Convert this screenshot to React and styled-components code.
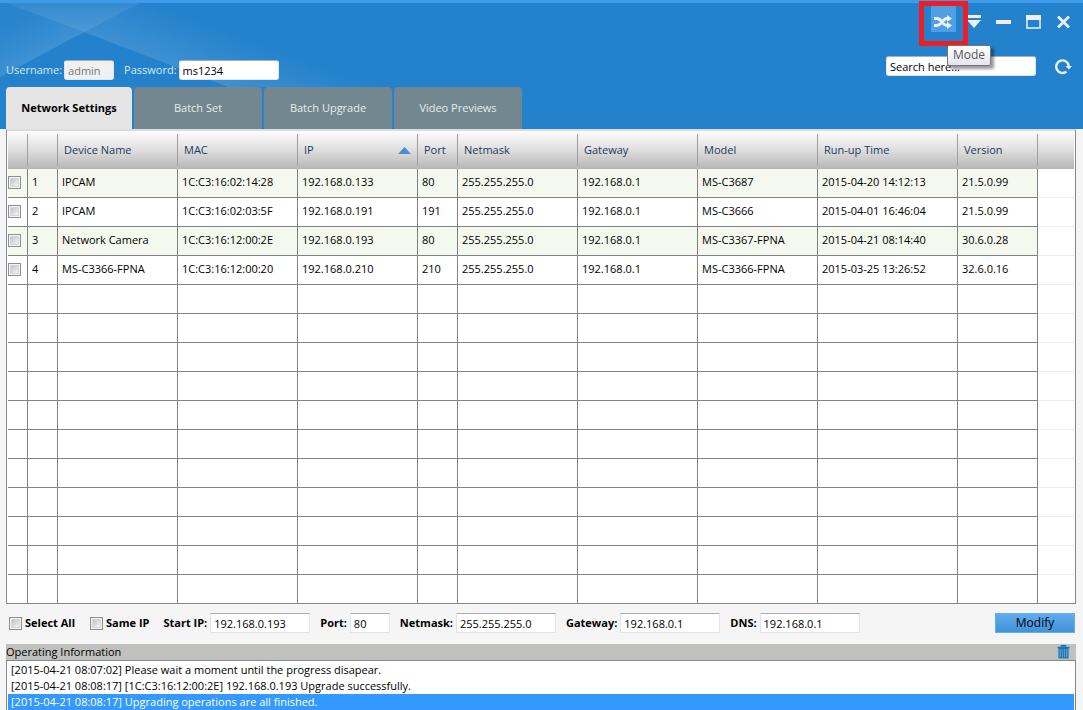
import React, { useState } from "react";
import styled, { createGlobalStyle, css } from "styled-components";

const GlobalStyle = createGlobalStyle`
  * { box-sizing: border-box; }
  body {
    margin: 0;
    background: #f5f5f5;
    color: #000;
    font: 11px/16px "Open Sans", "Noto Sans", sans-serif;
  }
  input, button { font: inherit; color: inherit; }
`;

const Page = styled.div`
  display: flex;
  flex-direction: column;
  min-height: 100vh;
`;

const Header = styled.header`
  position: relative;
  isolation: isolate;
  background: #2482cc;
  border-top: 3px solid #3f9bea;
  padding: 3px 7px 0 6px;
`;

const Rays = styled.svg`
  position: absolute;
  z-index: -1;
  left: 0;
  top: 0;
`;

const WindowBar = styled.div`
  display: flex;
  justify-content: flex-end;
  gap: 5px;
`;

const ModeHolder = styled.div`
  position: relative;
`;

const WindowButton = styled.button`
  display: flex;
  align-items: center;
  justify-content: center;
  width: 25px;
  height: 26px;
  padding: 0;
  border: 0;
  background: ${(p) => (p.$active ? "#4e9fe5" : "transparent")};
  color: #ecf0f4;
  ${WindowBar} & { padding-top: 5px; }
`;

const Highlight = styled.span`
  position: absolute;
  inset: -5px -12px -14px -12px;
  border: 5px solid #ee1c24;
  pointer-events: none;
`;

const Tooltip = styled.span`
  position: absolute;
  z-index: 2;
  left: 16px;
  top: 39px;
  padding: 1px 5px 2px;
  border: 1px solid #767676;
  border-radius: 2px;
  background: linear-gradient(#fff, #e4e5f0);
  box-shadow: 3px 3px 3px rgba(0, 0, 0, 0.4);
  color: #575757;
  font-size: 12px;
  line-height: 16px;
`;

const LoginRow = styled.div`
  display: flex;
  align-items: flex-end;
  justify-content: space-between;
  height: 24px;
  margin-top: 24px;
`;

const LoginFields = styled.div`
  display: flex;
  gap: 10px;
`;

const SearchArea = styled.div`
  display: flex;
  align-self: flex-start;
  align-items: center;
  gap: 15px;
  height: 20px;
`;

const Field = styled.label`
  display: flex;
  align-items: center;
  gap: ${(p) => (p.$light ? 2 : 3)}px;
  white-space: nowrap;
  ${(p) =>
    p.$light
      ? css`color: #d6e7f5;`
      : css`font-weight: 700;`}
`;

const TextInput = styled.input`
  width: ${(p) => (p.$size === "small" ? 40 : p.$size === "medium" ? 50 : p.$size === "large" ? 150 : 100)}px;
  height: 20px;
  padding: 0 3px;
  border: 1px solid #e2e3ea;
  border-top-color: #abadb3;
  border-radius: ${(p) => (p.$rounded ? 3 : 1)}px;
  background: #fff;
  color: #000;
  font-size: 11px;
  font-weight: 400;
  &:disabled {
    background: #f0f0f0;
    color: #777;
  }
  &::placeholder { color: #000; opacity: 1; }
`;

const Tabs = styled.nav`
  display: flex;
  gap: 2px;
  margin-top: 7px;
`;

const Tab = styled.button`
  width: ${(p) => (p.$active ? 126 : 128)}px;
  height: 42px;
  padding: 0;
  border: 0;
  border-radius: 4px 4px 0 0;
  background: ${(p) => (p.$active ? "#e5e5e5" : "#72878f")};
  color: ${(p) => (p.$active ? "#000" : "#e4ecf0")};
  font-weight: ${(p) => (p.$active ? 700 : 400)};
`;

const Main = styled.main`
  display: flex;
  flex: 1;
  flex-direction: column;
  padding: 0 7px 0 6px;
`;

const GridPanel = styled.section`
  border: 1px solid #828790;
  border-top: 2px solid #dcdcdc;
  padding: 0 1px;
  background: #fff;
`;

const Table = styled.table`
  width: 100%;
  border-collapse: separate;
  border-spacing: 0;
  table-layout: fixed;
`;

const HeadRow = styled.tr`
  height: 38px;
  background: linear-gradient(#fdfdfd, #e2e2e2 45%, #b6b6b6);
`;

const HeadCell = styled.th`
  padding: 0 6px;
  color: #1e395b;
  font-weight: 400;
  text-align: left;
  white-space: nowrap;
  background: linear-gradient(#a0a0a0, #a0a0a0) right 0 top 3px / 1px 32px no-repeat;
  &:last-child { background: none; }
`;

const HeadContent = styled.span`
  display: flex;
  align-items: center;
  justify-content: space-between;
`;

const Row = styled.tr`
  height: ${(p) => (p.$last ? 28 : 29)}px;
  td:not(:last-child) {
    background: ${(p) => (p.$tinted ? "#f5f8ee" : "#fff")};
    border-right: 1px solid #828282;
    border-bottom: ${(p) => (p.$last ? "0" : "1px solid #828282")};
  }
  td:last-child {
    border-bottom: ${(p) => (p.$last ? "0" : "1px solid #ececec")};
  }
`;

const Cell = styled.td`
  padding: 0 ${(p) => (p.$tight ? 0 : 4)}px 2px;
  white-space: nowrap;
`;

const Checkbox = styled.input.attrs({ type: "checkbox" })`
  appearance: none;
  display: block;
  width: 13px;
  height: 13px;
  margin: 0;
  border: 1px solid #8e8f8f;
  background: linear-gradient(135deg, #bfc3c8, #f4f4f4) center / 7px 7px no-repeat, #f4f4f4;
  outline: 1px solid #d4d6d8;
  outline-offset: -3px;
  &:checked { background: #3399ff; }
`;

const EditBar = styled.form`
  display: flex;
  align-items: center;
  gap: 10px;
  height: 40px;
  padding: 0 1px 2px 3px;
`;

const CheckGroup = styled.div`
  display: flex;
  gap: 15px;
  margin-right: 4px;
`;

const ModifyButton = styled.button`
  width: 80px;
  height: 20px;
  margin-left: auto;
  padding: 0;
  border: 1px solid #62aeee;
  background: linear-gradient(#60acf0, #4292da);
  font-size: 12px;
  line-height: 16px;
`;

const LogTitle = styled.div`
  display: flex;
  align-items: center;
  justify-content: space-between;
  height: 16px;
  padding-right: 6px;
  background: #c0c0be;
`;

const ClearButton = styled.button`
  display: flex;
  padding: 0;
  border: 0;
  background: none;
  color: #1b74b4;
`;

const Log = styled.ul`
  flex: 1;
  margin: 0;
  padding: 1px 1px 0;
  border: 1px solid #828790;
  border-bottom: 0;
  background: #fff;
  list-style: none;
`;

const LogLine = styled.li`
  padding: 0 3px;
  background: ${(p) => (p.$selected ? "#3399ff" : "transparent")};
  color: ${(p) => (p.$selected ? "#fff" : "#000")};
`;

const columns = [
  { label: "", width: 20 },
  { label: "", width: 30 },
  { label: "Device Name", width: 120 },
  { label: "MAC", width: 120 },
  { label: "IP", width: 120, sorted: true },
  { label: "Port", width: 40 },
  { label: "Netmask", width: 120 },
  { label: "Gateway", width: 120 },
  { label: "Model", width: 120 },
  { label: "Run-up Time", width: 140 },
  { label: "Version", width: 80 },
  { label: "" },
];

const devices = [
  ["IPCAM", "1C:C3:16:02:14:28", "192.168.0.133", "80", "255.255.255.0", "192.168.0.1", "MS-C3687", "2015-04-20 14:12:13", "21.5.0.99"],
  ["IPCAM", "1C:C3:16:02:03:5F", "192.168.0.191", "191", "255.255.255.0", "192.168.0.1", "MS-C3666", "2015-04-01 16:46:04", "21.5.0.99"],
  ["Network Camera", "1C:C3:16:12:00:2E", "192.168.0.193", "80", "255.255.255.0", "192.168.0.1", "MS-C3367-FPNA", "2015-04-21 08:14:40", "30.6.0.28"],
  ["MS-C3366-FPNA", "1C:C3:16:12:00:20", "192.168.0.210", "210", "255.255.255.0", "192.168.0.1", "MS-C3366-FPNA", "2015-03-25 13:26:52", "32.6.0.16"],
];

const ROW_COUNT = 15;
const tabNames = ["Network Settings", "Batch Set", "Batch Upgrade", "Video Previews"];

const addressFields = [
  { label: "Start IP:", value: "192.168.0.193" },
  { label: "Port:", value: "80", size: "small" },
  { label: "Netmask:", value: "255.255.255.0" },
  { label: "Gateway:", value: "192.168.0.1" },
  { label: "DNS:", value: "192.168.0.1" },
];

const messages = [
  "[2015-04-21 08:07:02] Please wait a moment until the progress disapear.",
  "[2015-04-21 08:08:17] [1C:C3:16:12:00:2E] 192.168.0.193 Upgrade successfully.",
  "[2015-04-21 08:08:17] Upgrading operations are all finished.",
];

const HeaderRays = () => (
  <Rays width="420" height="84" viewBox="0 3 420 84" aria-hidden="true">
    <defs>
      <linearGradient id="rayTop" x1="0" y1="0" x2="0" y2="1">
        <stop offset="0" stopColor="#fff" stopOpacity="0.07" />
        <stop offset="1" stopColor="#fff" stopOpacity="0.19" />
      </linearGradient>
      <linearGradient id="rayLeft" gradientUnits="userSpaceOnUse" x1="42" y1="54" x2="22" y2="16">
        <stop offset="0" stopColor="#fff" stopOpacity="0.12" />
        <stop offset="1" stopColor="#fff" stopOpacity="0.02" />
      </linearGradient>
      <linearGradient id="rayRight" gradientUnits="userSpaceOnUse" x1="156" y1="60" x2="174" y2="12">
        <stop offset="0" stopColor="#fff" stopOpacity="0.12" />
        <stop offset="1" stopColor="#fff" stopOpacity="0" />
      </linearGradient>
    </defs>
    <path d="M6 3H140L84 32Z" fill="url(#rayTop)" />
    <path d="M84 32L0 77V3H6Z" fill="url(#rayLeft)" />
    <path d="M84 32L228 87H420L140 3Z" fill="url(#rayRight)" />
  </Rays>
);

const ShuffleIcon = () => (
  <svg width="19" height="14" viewBox="0 0 19 14" fill="none" stroke="currentColor" strokeWidth="3" aria-hidden="true">
    <path d="M0 3.5H3C8 3.5 8 10.5 13 10.5H14" />
    <path d="M0 10.5H3C8 10.5 8 3.5 13 3.5H14" />
    <path d="M13 0L18 3.5L13 7ZM13 7L18 10.5L13 14Z" fill="currentColor" stroke="none" />
  </svg>
);

const MenuIcon = () => (
  <svg width="14" height="14" viewBox="0 0 14 14" fill="currentColor" aria-hidden="true">
    <path d="M0 0H14V3H0ZM0 5H14L7 13Z" />
  </svg>
);

const MinimizeIcon = () => (
  <svg width="15" height="14" viewBox="0 0 15 14" fill="currentColor" aria-hidden="true">
    <path d="M0 5H15V9H0Z" />
  </svg>
);

const MaximizeIcon = () => (
  <svg width="15" height="14" viewBox="0 0 15 14" aria-hidden="true">
    <path d="M1 1H14V13H1Z" fill="none" stroke="#b9d7f0" strokeWidth="2" />
    <path d="M0 0H15V5H0Z" fill="currentColor" />
  </svg>
);

const CloseIcon = () => (
  <svg width="13" height="12" viewBox="0 0 13 12" fill="none" stroke="currentColor" strokeWidth="2.8" aria-hidden="true">
    <path d="M1 0.5L12 11.5M12 0.5L1 11.5" />
  </svg>
);

const RefreshIcon = () => (
  <svg width="17" height="17" viewBox="0 0 17 17" aria-hidden="true">
    <path d="M11.5 13.6A6.3 6.3 0 1 1 13.8 8" fill="none" stroke="currentColor" strokeWidth="2.4" />
    <path d="M10.5 8H17L13.8 11.5Z" fill="currentColor" />
  </svg>
);

const TrashIcon = () => (
  <svg width="13" height="14" viewBox="0 0 13 14" fill="none" stroke="currentColor" aria-hidden="true">
    <path d="M0.5 2.5H12.5M4.5 2V0.8H8.5V2" strokeWidth="1.4" />
    <path d="M2 3.5H11V12.9H2Z" fill="#5d9cc8" strokeWidth="1.2" />
    <path d="M4.5 4V12M6.5 4V12M8.5 4V12" />
  </svg>
);

const SortIcon = () => (
  <svg width="14" height="7" viewBox="0 0 14 7" fill="#4a8fd6" aria-hidden="true">
    <path d="M0 7L6.5 0L13 7Z" />
  </svg>
);

export default function App() {
  const [tab, setTab] = useState(0);

  return (
    <Page>
      <GlobalStyle />
      <Header>
        <HeaderRays />
        <WindowBar>
          <ModeHolder>
            <WindowButton $active aria-label="Switch mode"><ShuffleIcon /></WindowButton>
            <Highlight />
            <Tooltip role="tooltip">Mode</Tooltip>
          </ModeHolder>
          <WindowButton aria-label="Menu"><MenuIcon /></WindowButton>
          <WindowButton aria-label="Minimize"><MinimizeIcon /></WindowButton>
          <WindowButton aria-label="Maximize"><MaximizeIcon /></WindowButton>
          <WindowButton aria-label="Close"><CloseIcon /></WindowButton>
        </WindowBar>
        <LoginRow>
          <LoginFields>
            <Field $light>
              Username:
              <TextInput $size="medium" $rounded disabled defaultValue="admin" />
            </Field>
            <Field $light>
              Password:
              <TextInput $rounded defaultValue="ms1234" />
            </Field>
          </LoginFields>
          <SearchArea>
            <TextInput $size="large" $rounded aria-label="Search" placeholder="Search here..." />
            <WindowButton aria-label="Refresh"><RefreshIcon /></WindowButton>
          </SearchArea>
        </LoginRow>
        <Tabs>
          {tabNames.map((name, i) => (
            <Tab key={name} $active={i === tab} onClick={() => setTab(i)}>{name}</Tab>
          ))}
        </Tabs>
      </Header>
      <Main>
        <GridPanel>
          <Table>
            <colgroup>
              {columns.map((c, i) => <col key={i} width={c.width} />)}
            </colgroup>
            <thead>
              <HeadRow>
                {columns.map((c, i) => (
                  <HeadCell key={i}>
                    <HeadContent>{c.label}{c.sorted && <SortIcon />}</HeadContent>
                  </HeadCell>
                ))}
              </HeadRow>
            </thead>
            <tbody>
              {Array.from({ length: ROW_COUNT }, (_, r) => {
                const device = devices[r];
                return (
                  <Row key={r} $tinted={device && r % 2 === 0} $last={r === ROW_COUNT - 1}>
                    <Cell $tight>{device && <Checkbox aria-label={`Select device ${r + 1}`} />}</Cell>
                    <Cell>{device && r + 1}</Cell>
                    {columns.slice(2, -1).map((c, i) => <Cell key={c.label}>{device && device[i]}</Cell>)}
                    <Cell />
                  </Row>
                );
              })}
            </tbody>
          </Table>
        </GridPanel>
        <EditBar onSubmit={(e) => e.preventDefault()}>
          <CheckGroup>
            <Field><Checkbox />Select All</Field>
            <Field><Checkbox />Same IP</Field>
          </CheckGroup>
          {addressFields.map((f) => (
            <Field key={f.label}>
              {f.label}
              <TextInput $size={f.size} defaultValue={f.value} />
            </Field>
          ))}
          <ModifyButton>Modify</ModifyButton>
        </EditBar>
        <LogTitle>
          Operating Information
          <ClearButton aria-label="Clear log"><TrashIcon /></ClearButton>
        </LogTitle>
        <Log>
          {messages.map((m, i) => <LogLine key={m} $selected={i === messages.length - 1}>{m}</LogLine>)}
        </Log>
      </Main>
    </Page>
  );
}
